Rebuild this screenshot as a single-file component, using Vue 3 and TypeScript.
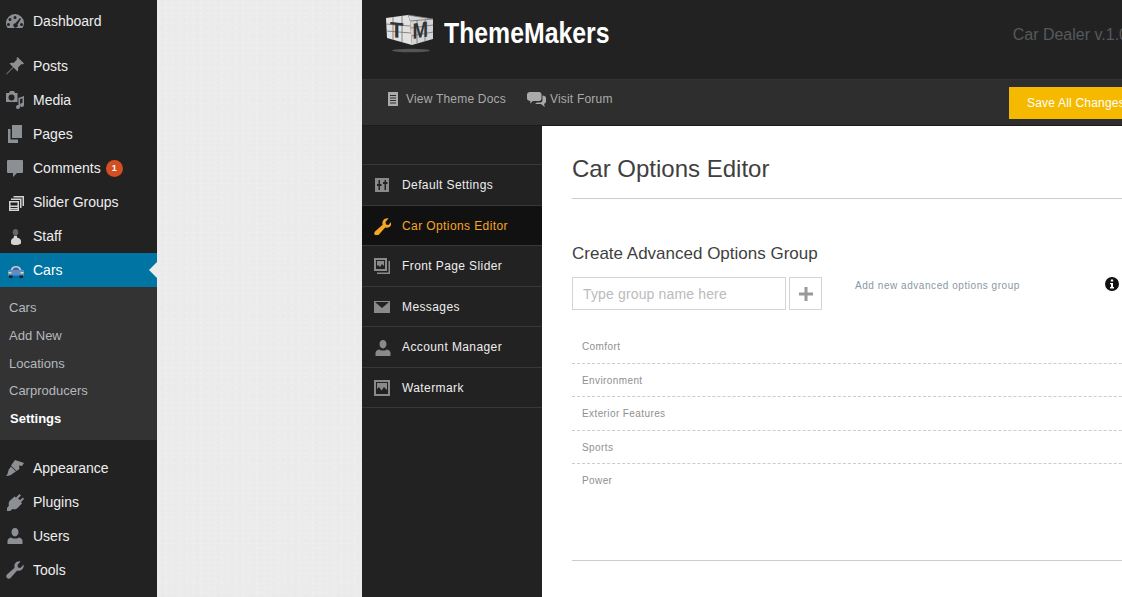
<template>
  <div class="page">
    <aside class="wp-menu">
      <a class="wp-item first">
        <svg class="wp-icon" viewBox="0 0 20 20"><path d="M10 3a9 9 0 0 0-9 9c0 2 .6 3.600 1.700 5h14.600A8.700 8.700 0 0 0 19 12a9 9 0 0 0-9-9zM5 7a1.500 1.500 0 1 1 0 3 1.500 1.500 0 0 1 0-3zm5-2a1.500 1.500 0 1 1 0 3 1.500 1.500 0 0 1 0-3zM3.500 12a1.500 1.500 0 1 1 0 3 1.500 1.500 0 0 1 0-3zm13 0a1.500 1.500 0 1 1 0 3 1.500 1.500 0 0 1 0-3zM15 7l1 1-3.500 5.500a2.200 2.200 0 1 1-2-1.200z" fill-rule="evenodd"/></svg>
        <span>Dashboard</span>
      </a>
      <a v-for="item in topItems" :key="item.label" class="wp-item" :class="{ gap: item.label === 'Posts' }">
        <svg class="wp-icon" :class="item.tone" viewBox="0 0 20 20">
          <path :d="item.icon" fill-rule="evenodd" />
          <path v-if="item.accent" :d="item.accent" class="accent" />
        </svg>
        <span>{{ item.label }}</span>
        <b v-if="item.badge" class="badge">{{ item.badge }}</b>
      </a>
      <a class="wp-item current">
        <svg class="wp-icon" viewBox="0 0 20 20">
          <path d="M5.500 10.500C6.500 7 8 6 11 6s4.500 1 5.500 4.500z" fill="#b8c7d6" />
          <path d="M7.500 10.500C8 8.500 9 7.500 11 7.500s3 1 3.500 3z" fill="#47677f" />
          <path d="M4 10h14c.6 0 1 .5 1 1v4.500H3V11c0-.5.4-1 1-1z" fill="#5a8ecb" />
          <rect x="4" y="15.500" width="3.500" height="2.500" fill="#15222c" />
          <rect x="14.500" y="15.500" width="3.500" height="2.500" fill="#15222c" />
          <rect x="3.500" y="12" width="3" height="1.500" fill="#f2d98a" />
          <rect x="15.500" y="12" width="3" height="1.500" fill="#f2d98a" />
        </svg>
        <span>Cars</span>
        <i class="current-arrow"></i>
      </a>
      <ul class="wp-submenu">
        <li v-for="sub in subItems" :key="sub" :class="{ active: sub === 'Settings' }">{{ sub }}</li>
      </ul>
      <a v-for="item in bottomItems" :key="item.label" class="wp-item">
        <svg class="wp-icon" viewBox="0 0 20 20"><path :d="item.icon" fill-rule="evenodd" /></svg>
        <span>{{ item.label }}</span>
      </a>
    </aside>

    <div class="gutter"></div>

    <main class="panel">
      <header class="brand-row">
        <div class="brand">
          <svg class="cube" viewBox="0 0 50 44">
            <ellipse cx="26" cy="39.500" rx="19" ry="1.800" fill="#555" />
            <path d="M1 7l22-3 2 6 2 24L2 27z" fill="#e2e2e2" />
            <path d="M23 4l25 4v20L27 34 25 10z" fill="#d4d4d4" />
            <path d="M1 13l24 2M1.500 20l24.500 2M8 6v23M17 5v26M25 10l23-2M26 17l22-3M26.500 25l21.500-4M32 9v23M40 9v21M23 4l25 4" stroke="#6f6f6f" stroke-width=".8" fill="none" />
            <text class="cube-t" transform="matrix(1 .1 0 1 5 26)">T</text>
            <text class="cube-m" transform="matrix(.85 -.14 0 1 27.500 28)">M</text>
          </svg>
          <span class="brand-name">ThemeMakers</span>
        </div>
        <span class="version">Car Dealer v.1.0</span>
      </header>

      <div class="tool-row">
        <a class="tool-link">
          <svg class="doc-icon" viewBox="0 0 10 14"><path d="M0 0h10v14H0zM2 3v1h6V3zm0 2.500v1h6v-1zM2 8v1h6V8zm0 2.500v1h6v-1z" fill-rule="evenodd" /></svg>
          View Theme Docs
        </a>
        <a class="tool-link forum">
          <svg class="forum-icon" viewBox="0 0 19 15"><path d="M3 0h9c1.500 0 2.500 1 2.500 2.500v4c0 1.500-1 2.500-2.500 2.500H6l-3 2.500.5-2.500C1.500 9 0 8 0 6.500v-4C0 1 1.500 0 3 0z" /><path d="M15.500 3.500c2 0 3.500 1 3.500 2.500v3.500c0 1.300-.8 2-2 2.300l.8 3.200-3.800-3H8l2-1.500h3.500c1.200 0 2-1 2-2.500z" /></svg>
          Visit Forum
        </a>
        <button class="save" type="button">Save All Changes</button>
      </div>

      <div class="body-row">
        <nav class="side-nav">
          <a v-for="tab in tabs" :key="tab.label" class="tab" :class="{ active: tab.active }">
            <svg class="tab-icon" viewBox="0 0 18 18"><path :d="tab.icon" fill-rule="evenodd" /></svg>
            {{ tab.label }}
          </a>
        </nav>

        <section class="content">
          <h1>Car Options Editor</h1>
          <h2>Create Advanced Options Group</h2>
          <div class="create-row">
            <input type="text" placeholder="Type group name here" />
            <button class="add" type="button">
              <svg viewBox="0 0 14 14"><path d="M5.500 0h3v5.500H14v3H8.500V14h-3V8.500H0v-3h5.500z" /></svg>
            </button>
            <p class="hint">Add new advanced options group</p>
            <svg class="info" viewBox="0 0 14 14"><path d="M7 0a7 7 0 1 1 0 14A7 7 0 0 1 7 0zM5.800 2.500v2h2.400v-2zM5 6v1.300h1V10H5v1.500h4V10H8V6z" fill-rule="evenodd" /></svg>
          </div>
          <ul class="groups">
            <li v-for="group in groups" :key="group">{{ group }}</li>
          </ul>
        </section>
      </div>
    </main>
  </div>
</template>

<script setup lang="ts">
interface MenuItem {
  label: string
  icon: string
  accent?: string
  badge?: number
  tone?: string
}

interface Tab {
  label: string
  icon: string
  active?: boolean
}

const wrench =
  'M18.500 4.500c.5 2-.2 4-1.800 5.200-1.300 1-3 1.200-4.500.7L5.500 18c-1 1-2.500 1-3.500 0s-1-2.500 0-3.500l7.600-6.700c-.5-1.500-.3-3.200.7-4.500C11.500 1.700 13.500 1 15.500 1.500L12.500 5l.5 2.500 2.500.5z'
const person =
  'M10 2c2.200 0 3.500 1.800 3.500 4s-1.300 4.500-3.500 4.500S6.500 8.200 6.500 6 7.800 2 10 2zM2.500 15c0-2 1.500-3 3.500-3.500l2 1h4l2-1c2 .5 3.500 1.500 3.500 3.500v3h-15z'

const topItems: MenuItem[] = [
  {
    label: 'Posts',
    icon: 'M12.500 1l6.500 6.500-1.500 1-1-.5-3.500 3.500c.5 1.500.2 3-.5 4L8.500 11.500 2 18l-1 .5.500-1L8 11 4.500 7.500c1-.7 2.500-1 4-.5L12 3.500l-.5-1z',
  },
  {
    label: 'Media',
    icon: 'M1 3h3l1-2h4l1 2h2.500v9H1zm5.500 1.500a3 3 0 1 0 0 6 3 3 0 0 0 0-6zM13.500 8l5.500-2v9a2 2 0 1 1-1.500-1.900V8.200l-2.500 1V17a2 2 0 1 1-1.500-1.900z',
  },
  {
    label: 'Pages',
    icon: 'M7 1h10v13H7zM3 5h2.500v10.500H13V19H3z',
  },
  {
    label: 'Comments',
    icon: 'M3 2h14a1 1 0 0 1 1 1v11a1 1 0 0 1-1 1h-5l-4 4v-4H3a1 1 0 0 1-1-1V3a1 1 0 0 1 1-1z',
    badge: 1,
  },
  {
    label: 'Slider Groups',
    tone: 'light',
    icon: 'M4 9h10v10H4zm1.500 1.500v3h7v-3zm0 4.500v1h7v-1zm0 2v.5h7V17zM6 6.500h10.500V16H15V8H6zM8.500 4H19v10h-1.500V5.500h-9z',
  },
  {
    label: 'Staff',
    tone: 'light',
    icon: 'M9 10h3v1.500c2 .5 4 1.500 4 3.500v2.500C13 19.500 8 19.500 6 17.500V15c0-1.500 1-2.500 2.500-3z',
    accent: 'M10.500 3c1.700 0 2.800 1.500 2.800 3.300S12.200 10 10.500 10 7.700 8.100 7.700 6.300 8.800 3 10.500 3z',
  },
]

const subItems = ['Cars', 'Add New', 'Locations', 'Carproducers', 'Settings']

const bottomItems: MenuItem[] = [
  {
    label: 'Appearance',
    icon: 'M10 2l9 3-2 3-3-.5.5 3.500-3 2-5.500-5.500zM6 8.500l5 5-2.500 1.500c-2 2-4 3-7.500 3 2-2 2-4 2.500-6z',
  },
  {
    label: 'Plugins',
    icon: 'M14.500 2l1.500 1.500-3 3 2 1.500 3-2.500 1 1.500-3 3 1 1.500-5 5c-1.500 1-3 1-4.500.5L5 19H2v-3l2-2.500c-.5-1.500-.5-3 .5-4.500l5-4.500 1.500 1z',
  },
  { label: 'Users', icon: person },
  { label: 'Tools', icon: wrench },
]

const tabs: Tab[] = [
  {
    label: 'Default Settings',
    icon: 'M2 2h14v14H2zM5.500 4v4H4v2h1.500v4H7v-4h1.500V8H7V4zm6 0v2H10v2h1.500v6H13V8h1.500V6H13V4z',
  },
  { label: 'Car Options Editor', icon: wrench, active: true },
  {
    label: 'Front Page Slider',
    icon: 'M1 1h13v13H1zm2 2v9h9V3zm1 1h7v5l-2-2-2 3-2-2-1 1zM15.500 4H17v13H4v-1.500h11.500z',
  },
  {
    label: 'Messages',
    icon: 'M1 3h16v12H1zm1.500 1.500L9 10l6.500-5.500v-.5h-13z',
  },
  { label: 'Account Manager', icon: person },
  {
    label: 'Watermark',
    icon: 'M1 1h16v16H1zm2 2v12h12V3zm1 1h10v7l-3-3-2.500 3.500L6 8l-2 2z',
  },
]

const groups = ['Comfort', 'Environment', 'Exterior Features', 'Sports', 'Power']
</script>

<style scoped>
.page {
  display: flex;
  width: 1122px;
  height: 597px;
  overflow: hidden;
  font-family: 'Liberation Sans', Arial, sans-serif;
}

.wp-menu {
  flex: none;
  width: 157px;
  padding-top: 4px;
  background: #222;
  font-size: 14px;
}

.wp-item {
  position: relative;
  display: flex;
  align-items: center;
  height: 34px;
  color: #eee;
}

.wp-item.gap {
  margin-top: 11px;
}

.wp-item > span {
  margin-left: 5px;
}

.wp-icon {
  width: 20px;
  height: 20px;
  margin-left: 5px;
  margin-right: 3px;
  fill: #8c8f94;
}

.wp-icon.light {
  fill: #d4d4d4;
}

.wp-icon .accent {
  fill: #666;
}

.badge {
  width: 17px;
  height: 17px;
  margin-left: 5px;
  border-radius: 50%;
  background: #d54e21;
  color: #fff;
  font-size: 9px;
  line-height: 17px;
  text-align: center;
}

.wp-item.current {
  background: #0074a2;
  color: #fff;
}

.current-arrow {
  position: absolute;
  top: 9px;
  right: 0;
  border: 8px solid transparent;
  border-right-color: #ececec;
  border-left-width: 0;
}

.wp-submenu {
  height: 153px;
  margin: 0 0 11px;
  padding: 7px 0 0 9px;
  box-sizing: border-box;
  list-style: none;
  background: #333;
  color: #b4b9be;
  font-size: 13px;
}

.wp-submenu li {
  height: 27.800px;
  line-height: 27.800px;
}

.wp-submenu li.active {
  padding-left: 1px;
  color: #fff;
  font-weight: 700;
}

.gutter {
  flex: none;
  width: 205px;
  background-color: #ebebeb;
  background-image:
    radial-gradient(circle at 2px 3px, rgba(255, 255, 255, 0.16) 0 1px, transparent 2px),
    radial-gradient(circle at 6px 1px, rgba(0, 0, 0, 0.008) 0 1px, transparent 2px);
  background-size: 7px 5px, 11px 9px;
}

.panel {
  flex: none;
  display: flex;
  flex-direction: column;
  width: 780px;
  background: #222;
}

.brand-row {
  display: flex;
  align-items: flex-start;
  height: 79px;
}

.brand {
  display: flex;
  align-items: center;
  height: 66px;
  padding-left: 23px;
}

.cube {
  width: 50px;
  height: 44px;
}

.cube-t,
.cube-m {
  fill: #333;
  font-size: 22px;
  font-weight: 700;
}

.brand-name {
  display: inline-block;
  margin-left: 9px;
  color: #fff;
  font-size: 30px;
  font-weight: 700;
  transform: scaleX(0.827);
  transform-origin: left center;
}

.version {
  margin-left: auto;
  margin-right: 14px;
  padding-top: 26px;
  color: #55595d;
  font-size: 16px;
  white-space: nowrap;
}

.tool-row {
  display: flex;
  align-items: center;
  height: 47px;
  padding-left: 26px;
  border-top: 1px solid #333;
  border-bottom: 1px solid #1c1c1c;
  background: #2e2e2e;
  box-sizing: border-box;
}

.tool-link {
  display: flex;
  align-items: center;
  gap: 8px;
  margin-right: 21px;
  margin-bottom: 7px;
  color: #aaa;
  font-size: 12px;
  letter-spacing: 0.2px;
}

.tool-link.forum {
  gap: 4px;
}

.doc-icon {
  width: 10px;
  height: 14px;
  fill: #aaa;
}

.forum-icon {
  width: 19px;
  height: 15px;
  fill: #aaa;
}

.save {
  flex: none;
  width: 135px;
  height: 32px;
  margin-left: auto;
  margin-right: -2px;
  padding: 1px 0 0 18px;
  border: none;
  background: #f5b900;
  color: #fff;
  font: 12px 'Liberation Sans', Arial, sans-serif;
  letter-spacing: 0.2px;
  text-align: left;
}

.body-row {
  flex: 1;
  display: flex;
  min-height: 0;
}

.side-nav {
  flex: none;
  display: flex;
  flex-direction: column;
  width: 180px;
  padding-top: 38px;
  box-sizing: border-box;
}

.tab {
  display: flex;
  align-items: center;
  height: 41px;
  padding-left: 11px;
  border-top: 1px solid #383838;
  box-sizing: border-box;
  color: #eee;
  font-size: 12px;
  letter-spacing: 0.4px;
}

.tab:nth-child(even) {
  height: 40px;
}

.tab:last-child {
  height: 41px;
  border-bottom: 1px solid #383838;
}

.tab.active {
  background: #111;
  color: #f5a623;
}

.tab-icon {
  flex: none;
  width: 18px;
  height: 18px;
  margin-right: 11px;
  fill: #8a8a8a;
}

.tab.active .tab-icon {
  fill: #f5a623;
}

.content {
  flex: 1;
  margin-right: -60px;
  padding: 0 0 0 30px;
  background: #fff;
  color: #3f3f3f;
}

h1 {
  height: 73px;
  margin: 0;
  padding-top: 28px;
  box-sizing: border-box;
  border-bottom: 1px solid #ccc;
  font-size: 24px;
  font-weight: 400;
  line-height: 30px;
}

h2 {
  margin: 45px 0 0;
  font-size: 17px;
  font-weight: 400;
  line-height: 20px;
}

.create-row {
  display: flex;
  align-items: flex-start;
  margin-top: 13px;
}

input {
  width: 214px;
  height: 33px;
  padding: 0 10px;
  border: 1px solid #d4d4d4;
  box-sizing: border-box;
  font: 14px 'Liberation Sans', Arial, sans-serif;
  letter-spacing: 0.15px;
  outline: none;
}

input::placeholder {
  color: #bbb;
}

.add {
  display: flex;
  align-items: center;
  justify-content: center;
  width: 33px;
  height: 33px;
  margin-left: 3px;
  padding: 0;
  border: 1px solid #d4d4d4;
  background: #fff;
}

.add svg {
  width: 14px;
  height: 14px;
  fill: #999;
}

.hint {
  width: 250px;
  margin: 3px 0 0 33px;
  color: #8a97a3;
  font-size: 10px;
  letter-spacing: 0.55px;
  line-height: 12px;
}

.info {
  flex: none;
  width: 14px;
  height: 14px;
  fill: #111;
}

.groups {
  height: 230px;
  margin: 20px 0 0;
  padding: 0;
  list-style: none;
  border-bottom: 1px solid #ccc;
  box-sizing: content-box;
  color: #8f8f8f;
  font-size: 10px;
}

.groups li {
  height: 33.500px;
  padding-left: 10px;
  box-sizing: border-box;
  border-bottom: 1px dashed #ccc;
  line-height: 33px;
  letter-spacing: 0.4px;
}

.groups li:last-child {
  border-bottom: none;
}
</style>

<style>
html,
body {
  margin: 0;
  overflow: hidden;
}
</style>
